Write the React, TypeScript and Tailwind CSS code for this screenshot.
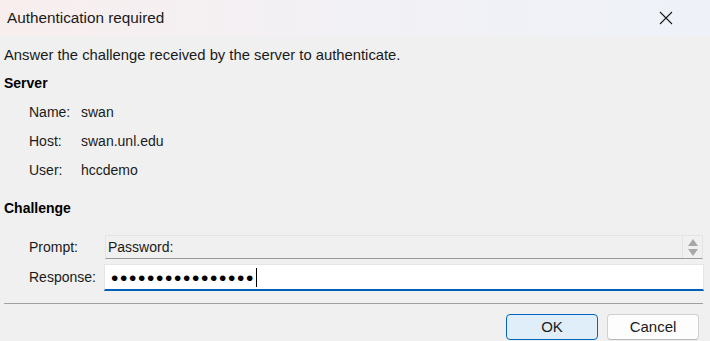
import React from "react";

const font = { fontFamily: '"Liberation Sans", Arial, sans-serif' };

function Row({ label, value }: { label: string; value: string }) {
  return (
    <div className="flex h-[29px] items-center pl-[25px] text-[14px] text-[#1a1a1a]">
      <span className="w-[52px]">{label}</span>
      <span>{value}</span>
    </div>
  );
}

export default function App() {
  const dots = "••••••••••••••••";
  return (
    <div className="flex h-[341px] w-[710px] flex-col bg-[#f0f0f0]" style={font}>
      <div className="flex h-[36px] shrink-0 items-center justify-between bg-gradient-to-r from-[#f8eeee] via-[#f2f1f5] to-[#eef2f8] pl-[7px] pr-[37px]">
        <span className="text-[15.3px] text-[#1a1a1a]">Authentication required</span>
        <svg width="14" height="14" viewBox="0 0 14 14" className="text-[#1a1a1a]">
          <path d="M1 1 L13 13 M13 1 L1 13" stroke="currentColor" strokeWidth="1.1" fill="none" />
        </svg>
      </div>
      <div className="flex flex-1 flex-col pl-[4px] pr-[6px]">
        <div className="flex h-[33px] items-center pt-[6px] text-[14.8px] text-[#1a1a1a]">
          Answer the challenge received by the server to authenticate.
        </div>
        <div className="flex h-[29px] items-center text-[14px] font-bold text-black">Server</div>
        <Row label="Name:" value="swan" />
        <Row label="Host:" value="swan.unl.edu" />
        <Row label="User:" value="hccdemo" />
        <div className="flex h-[44px] items-center pt-[2px] text-[14px] font-bold text-black">Challenge</div>
        <div className="mt-[5px] flex h-[26px] items-center pl-[25px] text-[14px] text-[#1a1a1a]">
          <span className="w-[76px]">Prompt:</span>
          <div className="mr-[1px] flex h-[24px] flex-1 items-center border border-[#e3e3e3] border-b-[#9a9a9a] bg-[#f0f0f0] pl-[2px]">
            <span className="flex-1">Password:</span>
            <div className="flex h-full w-[20px] flex-col items-center justify-center gap-[3px] border-l border-[#e3e3e3]">
              <svg width="10" height="7" viewBox="0 0 10 7"><path d="M5 0 L10 7 L0 7 Z" fill="#a8a8a8" /></svg>
              <svg width="10" height="7" viewBox="0 0 10 7"><path d="M0 0 L10 0 L5 7 Z" fill="#a8a8a8" /></svg>
            </div>
          </div>
        </div>
        <div className="mt-[4px] flex h-[27px] items-center pl-[25px] text-[14px] text-[#1a1a1a]">
          <span className="w-[75px]">Response:</span>
          <div className="flex h-[27px] flex-1 items-center border border-[#e5e5e5] border-b-2 border-b-[#005fb8] bg-white pl-[6px]">
            <span className="text-[21px] leading-none tracking-[1.65px] text-black">{dots}</span>
            <span className="ml-[1px] h-[19px] w-[1px] bg-black" />
          </div>
        </div>
        <div className="mt-[12px] h-[1px] w-[699px] bg-[#a0a0a0]" />
        <div className="mt-[10px] flex justify-end gap-[9px] pr-[5px]">
          <button className="h-[26px] w-[92px] rounded-[4px] border border-[#0067c0] bg-[#e0eef9] text-[15px] text-[#1a1a1a]">OK</button>
          <button className="h-[26px] w-[92px] rounded-[4px] border border-[#d0d0d0] border-b-[#b8b8b8] bg-[#fdfdfd] text-[15px] text-[#1a1a1a]">Cancel</button>
        </div>
      </div>
    </div>
  );
}
